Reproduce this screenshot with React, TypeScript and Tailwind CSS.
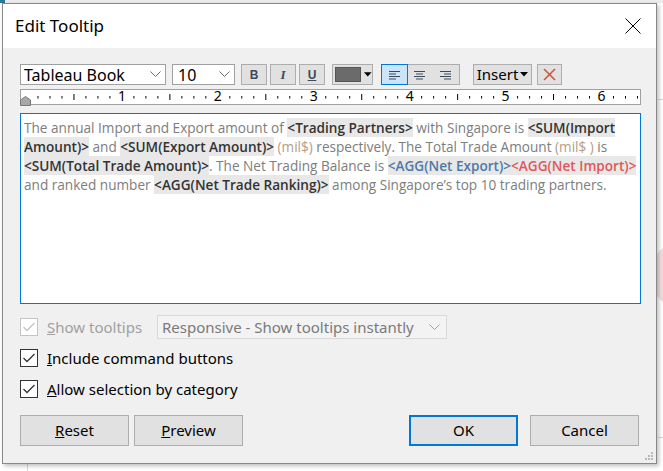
import React from "react";

const ui = { fontFamily: '"Noto Sans", "Liberation Sans", sans-serif' };
const body = { fontFamily: '"Open Sans", "Noto Sans", sans-serif' };

function Chevron({ color = "#6d6d6d" }: { color?: string }) {
  return (
    <svg width="11" height="7" viewBox="0 0 11 7">
      <polyline points="0.5,0.5 5.5,5.5 10.5,0.5" fill="none" stroke={color} strokeWidth="1" />
    </svg>
  );
}

function Caret() {
  return (
    <svg width="8" height="5" viewBox="0 0 8 5">
      <polygon points="0,0 8,0 4,4.5" fill="#000" />
    </svg>
  );
}

function AlignIcon({ kind }: { kind: "left" | "center" | "right" }) {
  const s = kind === "left" ? 0 : kind === "center" ? 2 : 4;
  const e = kind === "left" ? 7 : kind === "center" ? 9 : 11;
  const rows = [[0, 11], [s, e], [0, 11], [s, e]];
  return (
    <svg width="12" height="10" viewBox="0 0 12 10">
      {rows.map((r, i) => (
        <line key={i} x1={r[0]} x2={r[1]} y1={1.5 + i * 2.5} y2={1.5 + i * 2.5} stroke="#3b4a5c" strokeWidth="1" />
      ))}
    </svg>
  );
}

function Ruler() {
  const ticks = [];
  const nums = [];
  for (let i = 1; i < 52; i++) {
    const x = 5 + i * 11.99;
    if (i % 8 === 0) {
      nums.push(
        <span key={i} className="absolute top-[-3px] w-[16px] text-center text-[14px] leading-[18px] text-black" style={{ left: x - 8 }}>
          {i / 8}
        </span>
      );
    } else if (i % 4 === 0) {
      ticks.push(<line key={i} x1={x} x2={x} y1="4" y2="10" stroke="#000" strokeWidth="1" />);
    } else {
      ticks.push(<line key={i} x1={x} x2={x} y1="6" y2="8.5" stroke="#000" strokeWidth="1" />);
    }
  }
  return (
    <div className="relative mt-[4px] h-[16px] w-[621px] border border-[#a0a0a0] bg-white">
      <svg width="619" height="14" viewBox="0 0 619 14">{ticks}</svg>
      {nums}
      <svg className="absolute left-[-1px] top-[6px]" width="11" height="10" viewBox="0 0 11 10">
        <polygon points="5.5,0.5 10.5,4 10.5,9.5 0.5,9.5 0.5,4" fill="#a8a8a8" stroke="#777" strokeWidth="1" />
      </svg>
    </div>
  );
}

function Tag({ children, color = "#333" }: { children: React.ReactNode; color?: string }) {
  return (
    <span className="bg-[#e8e8e8] font-semibold" style={{ color }}>
      {children}
    </span>
  );
}

function Check({ disabled }: { disabled?: boolean }) {
  const c = disabled ? "#c4c4c4" : "#333";
  return (
    <div className={`flex h-[18px] w-[18px] items-center justify-center border ${disabled ? "border-[#c4c4c4]" : "border-[#333]"} bg-white`}>
      <svg width="12" height="10" viewBox="0 0 12 10">
        <polyline points="0.5,5 4,8.5 11.5,1" fill="none" stroke={c} strokeWidth="1.3" />
      </svg>
    </div>
  );
}

export default function App() {
  return (
    <div className="relative h-[471px] w-[663px] overflow-hidden bg-white pl-[2px] pt-[3px]" style={ui}>
      {/* background app behind the dialog */}
      <div className="absolute left-0 top-0 h-[3px] w-full bg-[#ececec]" />
      <div className="absolute left-0 top-0 h-[3px] w-[5px] bg-[#2f7595]" />
      <div className="absolute left-[658px] top-[99px] h-px w-[6px] bg-[#d8d8d8]" />
      <div className="absolute left-[650px] top-[240px] h-[70px] w-[70px] rounded-full bg-[#f3dede]" />
      <div className="absolute left-[658px] top-[437px] h-px w-[6px] bg-[#d8d8d8]" />
      <div className="absolute left-[27px] top-[464px] h-[8px] w-px bg-[#d8d8d8]" />

      <div className="relative flex h-[461px] w-[655px] flex-col border border-[#888] bg-[#f0f0f0] shadow-[2px_2px_4px_rgba(0,0,0,0.25)]">
        {/* title bar */}
        <div className="flex h-[44px] items-center justify-between bg-white pl-[12px] pr-[15px]">
          <span className="text-[17px] text-black">Edit Tooltip</span>
          <svg width="16" height="16" viewBox="0 0 16 16">
            <line x1="0.5" y1="0.5" x2="15.5" y2="15.5" stroke="#000" strokeWidth="1" />
            <line x1="15.5" y1="0.5" x2="0.5" y2="15.5" stroke="#000" strokeWidth="1" />
          </svg>
        </div>

        <div className="flex flex-col pl-[17px] pr-[15px] pt-[16px]">
          {/* toolbar */}
          <div className="flex h-[21px] items-stretch">
            <div className="flex w-[146px] items-center justify-between border border-[#a0a0a0] bg-white pl-[3px] pr-[4px]">
              <span className="text-[16px] leading-none text-black">Tableau Book</span>
              <Chevron />
            </div>
            <div className="ml-[6px] flex w-[63px] items-center justify-between border border-[#a0a0a0] bg-white pl-[5px] pr-[4px]">
              <span className="text-[16px] leading-none text-black">10</span>
              <Chevron />
            </div>
            <div className="ml-[6px] flex w-[26px] items-center justify-center border border-[#adadad] bg-[#e1e1e1] text-[12px] font-bold text-[#3b4a5c]" style={{ fontFamily: '"Liberation Sans", sans-serif' }}>
              B
            </div>
            <div className="ml-[3px] flex w-[26px] items-center justify-center border border-[#adadad] bg-[#e1e1e1] text-[13px] font-bold italic text-[#3b4a5c]" style={{ fontFamily: '"Liberation Serif", serif' }}>
              I
            </div>
            <div className="ml-[3px] flex w-[26px] items-center justify-center border border-[#adadad] bg-[#e1e1e1] text-[12px] font-bold text-[#3b4a5c] underline" style={{ fontFamily: '"Liberation Sans", sans-serif' }}>
              U
            </div>
            <div className="ml-[7px] flex w-[41px] items-center gap-[3px] border border-[#adadad] bg-[#e1e1e1] pl-[2px]">
              <div className="h-[15px] w-[28px] border border-[#555] bg-[#6b6b6b]" />
              <Caret />
            </div>
            <div className="ml-[8px] flex w-[79px] border border-[#adadad] bg-[#e1e1e1]">
              <div className="-m-px flex w-[27px] items-center justify-center border border-[#0078d7] bg-[#cce4f7]">
                <AlignIcon kind="left" />
              </div>
              <div className="flex w-[26px] items-center justify-center">
                <AlignIcon kind="center" />
              </div>
              <div className="flex w-[26px] items-center justify-center">
                <AlignIcon kind="right" />
              </div>
            </div>
            <div className="ml-[13px] flex w-[59px] items-center justify-center gap-[2px] border border-[#adadad] bg-[#e1e1e1]">
              <span className="text-[15px] leading-none text-black">Insert</span>
              <Caret />
            </div>
            <div className="ml-[5px] flex w-[25px] items-center justify-center border border-[#adadad] bg-[#e1e1e1]">
              <svg width="13" height="13" viewBox="0 0 13 13">
                <line x1="1" y1="1" x2="12" y2="12" stroke="#c9573f" strokeWidth="1.6" />
                <line x1="12" y1="1" x2="1" y2="12" stroke="#c9573f" strokeWidth="1.6" />
              </svg>
            </div>
          </div>

          <Ruler />

          {/* tooltip text editor */}
          <div className="mt-[8px] h-[191px] w-[621px] border border-[#0078d7] bg-white pl-[3px] pt-[4px] text-[13.6px] leading-[19px] text-[#7d7d7d]" style={body}>
            <div className="whitespace-nowrap">
              The annual Import and Export amount of <Tag>&lt;Trading Partners&gt;</Tag> with Singapore is <Tag>&lt;SUM(Import</Tag>
            </div>
            <div className="whitespace-nowrap">
              <Tag>Amount)&gt;</Tag> and <Tag>&lt;SUM(Export Amount)&gt;</Tag> <span className="text-[#b39d86]">(mil$)</span> respectively. The Total Trade Amount <span className="text-[#b39d86]">(mil$ )</span> is
            </div>
            <div className="whitespace-nowrap">
              <Tag>&lt;SUM(Total Trade Amount)&gt;</Tag>. The Net Trading Balance is <Tag color="#4e79a7">&lt;AGG(Net Export)&gt;</Tag>
              <Tag color="#e15759">&lt;AGG(Net Import)&gt;</Tag>
            </div>
            <div className="whitespace-nowrap">
              and ranked number <Tag>&lt;AGG(Net Trade Ranking)&gt;</Tag> among Singapore’s top 10 trading partners.
            </div>
          </div>

          {/* options */}
          <div className="mt-[11px] flex h-[24px] items-center">
            <Check disabled />
            <span className="ml-[9px] w-[110px] text-[15px] text-[#a0a0a0]">
              <span className="underline">S</span>how tooltips
            </span>
            <div className="flex h-[24px] w-[290px] items-center justify-between border border-[#d9d9d9] bg-[#f3f3f3] pl-[4px] pr-[6px]">
              <span className="text-[15px] text-[#7a7a7a]">Responsive - Show tooltips instantly</span>
              <Chevron color="#a0a0a0" />
            </div>
          </div>
          <div className="mt-[7px] flex h-[24px] items-center">
            <Check />
            <span className="ml-[9px] text-[15px] text-black">
              <span className="underline">I</span>nclude command buttons
            </span>
          </div>
          <div className="mt-[7px] flex h-[24px] items-center">
            <Check />
            <span className="ml-[9px] text-[15px] text-black">
              <span className="underline">A</span>llow selection by category
            </span>
          </div>

          {/* buttons */}
          <div className="mt-[14px] flex h-[31px] pr-[2px]">
            <div className="flex w-[109px] items-center justify-center border border-[#adadad] bg-[#e1e1e1] text-[15px] text-black">
              <span><span className="underline">R</span>eset</span>
            </div>
            <div className="ml-[5px] flex w-[109px] items-center justify-center border border-[#adadad] bg-[#e1e1e1] text-[15px] text-black">
              <span><span className="underline">P</span>review</span>
            </div>
            <div className="ml-auto flex w-[109px] items-center justify-center border-2 border-[#0078d7] bg-[#e1e1e1] text-[15px] text-black">
              OK
            </div>
            <div className="ml-[12px] flex w-[109px] items-center justify-center border border-[#adadad] bg-[#e1e1e1] text-[15px] text-black">
              Cancel
            </div>
          </div>
        </div>

        {/* resize grip */}
        <svg className="absolute bottom-[2px] right-[2px]" width="9" height="9" viewBox="0 0 9 9">
          <rect x="6" y="0" width="2" height="2" fill="#b8b8b8" />
          <rect x="3" y="3" width="2" height="2" fill="#b8b8b8" />
          <rect x="6" y="3" width="2" height="2" fill="#b8b8b8" />
          <rect x="0" y="6" width="2" height="2" fill="#b8b8b8" />
          <rect x="3" y="6" width="2" height="2" fill="#b8b8b8" />
          <rect x="6" y="6" width="2" height="2" fill="#b8b8b8" />
        </svg>
      </div>
    </div>
  );
}
